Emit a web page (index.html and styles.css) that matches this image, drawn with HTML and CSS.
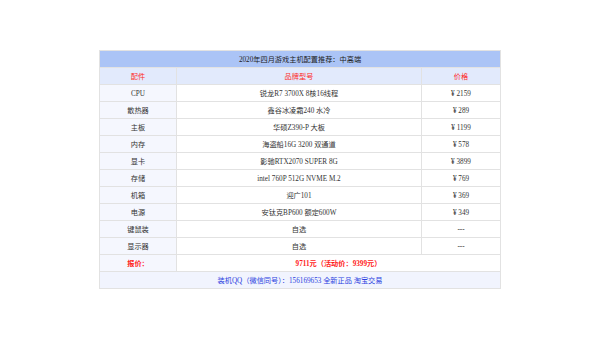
FILE: index.html
```html
<!DOCTYPE html>
<html lang="zh">
<head>
<meta charset="utf-8">
<title>2020年四月游戏主机配置推荐：中高端</title>
<link rel="stylesheet" href="styles.css">
</head>
<body>
<table class="spec">
  <colgroup>
    <col class="c1"><col class="c2"><col class="c3">
  </colgroup>
  <tr class="title"><td colspan="3">2020年四月游戏主机配置推荐：中高端</td></tr>
  <tr class="head"><td class="first">配件</td><td>品牌型号</td><td>价格</td></tr>
  <tr><td class="first">CPU</td><td>锐龙R7 3700X 8核16线程</td><td>¥ 2159</td></tr>
  <tr><td class="first">散热器</td><td>鑫谷冰凌霜240 水冷</td><td>¥ 289</td></tr>
  <tr><td class="first">主板</td><td>华硕Z390-P 大板</td><td>¥ 1199</td></tr>
  <tr><td class="first">内存</td><td>海盗船16G 3200 双通道</td><td>¥ 578</td></tr>
  <tr><td class="first">显卡</td><td>影驰RTX2070 SUPER 8G</td><td>¥ 3899</td></tr>
  <tr><td class="first">存储</td><td>intel 760P 512G NVME M.2</td><td>¥ 769</td></tr>
  <tr><td class="first">机箱</td><td>迎广101</td><td>¥ 369</td></tr>
  <tr><td class="first">电源</td><td>安钛克BP600 额定600W</td><td>¥ 349</td></tr>
  <tr><td class="first">键鼠装</td><td>自选</td><td>---</td></tr>
  <tr><td class="first">显示器</td><td>自选</td><td>---</td></tr>
  <tr class="quote"><td class="first">报价：</td><td colspan="2">9711元（活动价：9399元）</td></tr>
  <tr class="foot"><td colspan="3">装机QQ（微信同号）：156169653 全新正品 淘宝交易</td></tr>
</table>
</body>
</html>
```
FILE: styles.css
```css
html, body {
  margin: 0;
  padding: 0;
  background: #ffffff;
}
body {
  padding-top: 50px;
  font-family: "Liberation Serif", "Noto Sans CJK SC", serif;
  font-size: 7.2px;
  color: #333333;
}
.spec {
  width: 401px;
  margin: 0 auto;
  border-collapse: collapse;
  table-layout: fixed;
}
.c1 { width: 77px; }
.c2 { width: 245px; }
.c3 { width: 79px; }
.spec td {
  border: 1px solid #e2e2e2;
  height: 15px;
  padding: 1px 0 0 0;
  text-align: center;
  vertical-align: middle;
  line-height: 10px;
}
.spec td.first {
  background: #f5f7fe;
}
.title td {
  background: #abc4f6;
  color: #222222;
}
.head td, .head td.first {
  background: #e2eafc;
  color: #ff2a2a;
}
.quote td {
  color: #ff1a1a;
  font-weight: bold;
}
.foot td {
  background: #f1f4fe;
  color: #2b3fe0;
}
```
